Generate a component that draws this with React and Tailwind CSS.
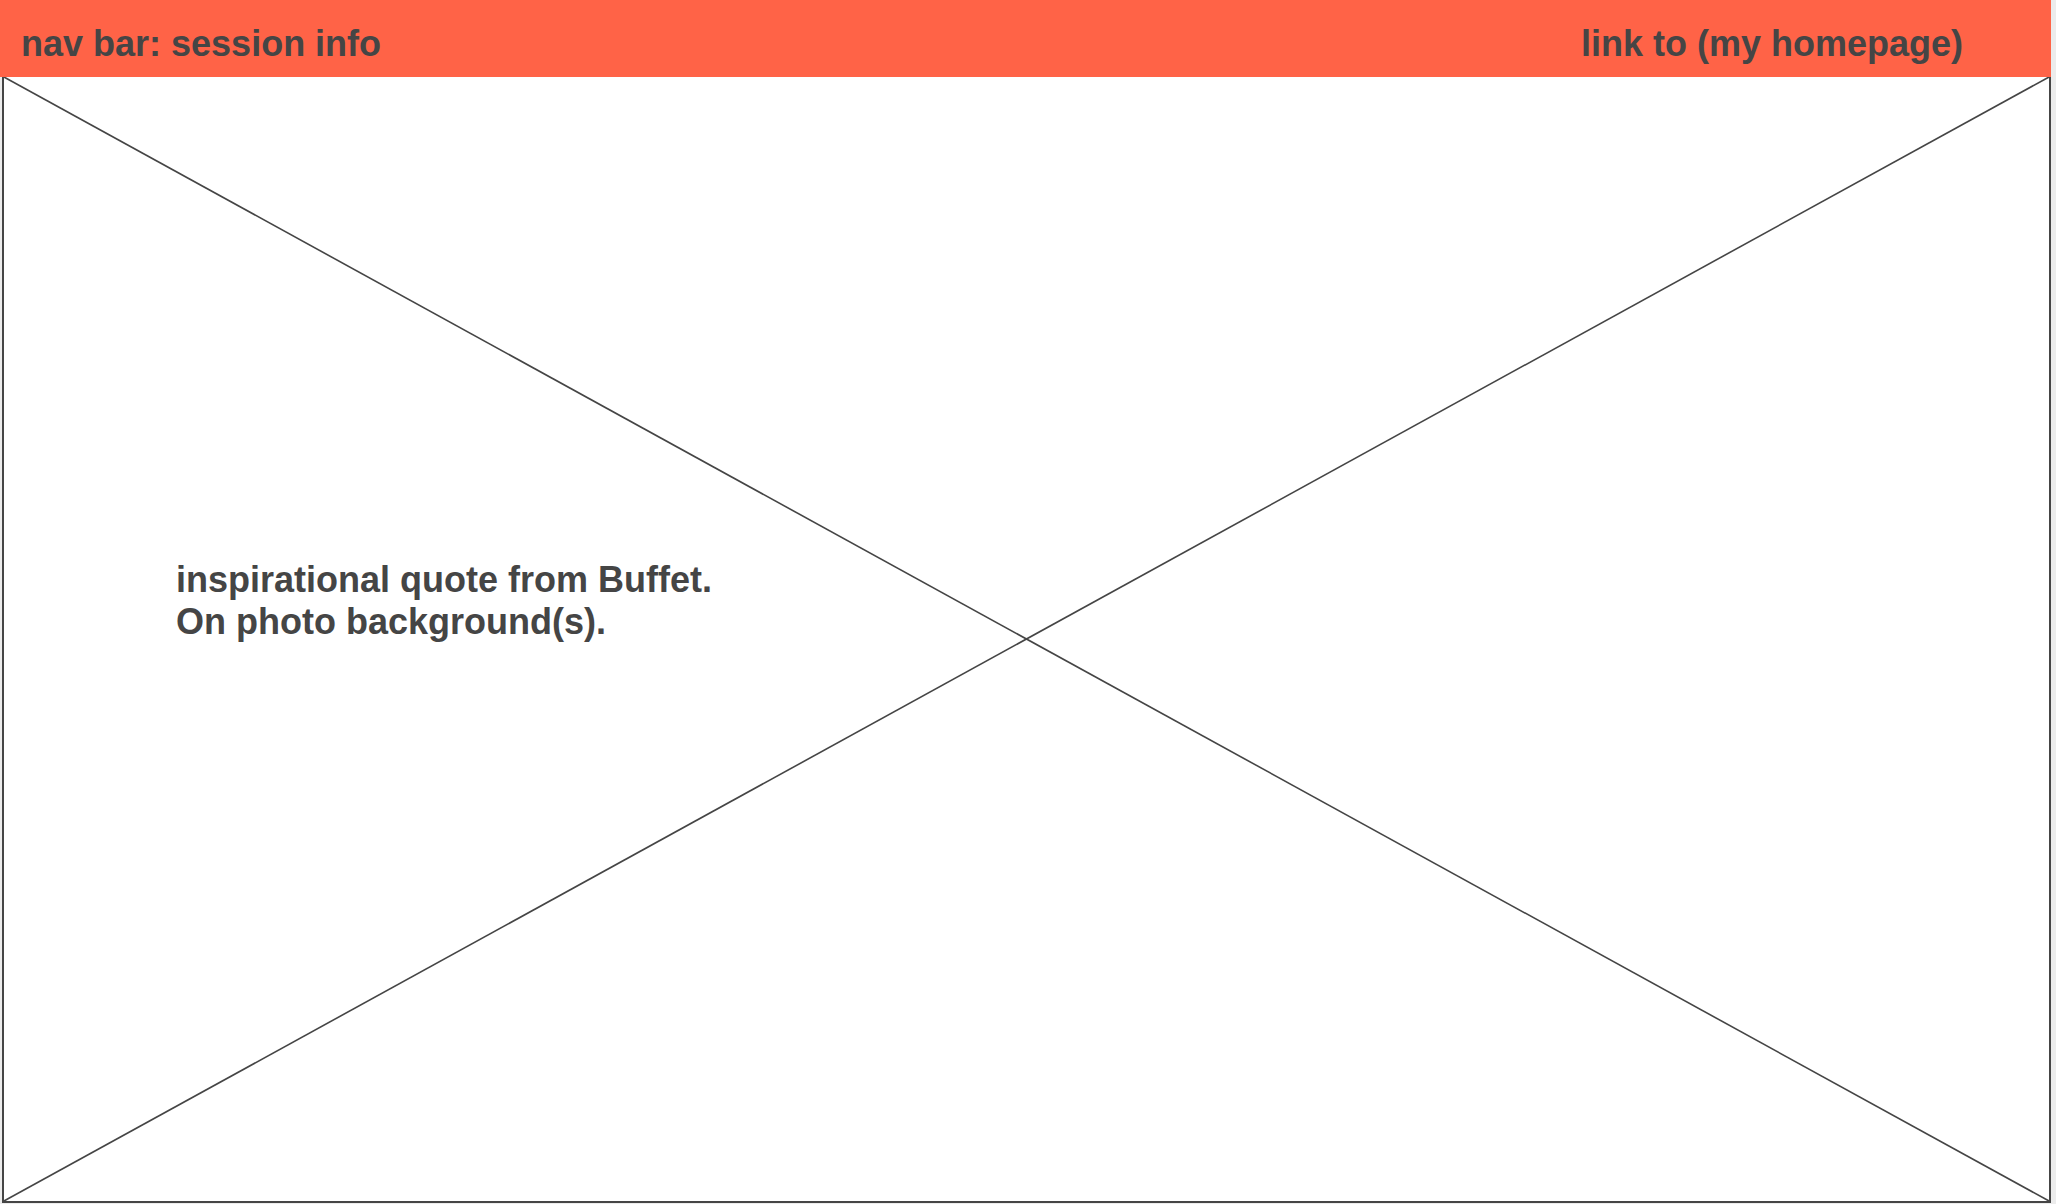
export default function App() {
  return (
    <div
      className="w-[2056px] h-[1204px] bg-[#ececec] flex flex-col overflow-hidden"
      style={{ fontFamily: '"Liberation Sans", Arial, sans-serif' }}
    >
      <nav className="w-[2051px] h-[77px] shrink-0 bg-[#ff6347] flex items-center justify-between pl-[21px] pr-[88px] pt-[10px] text-[#454545] font-bold text-[36px] leading-none">
        <span>nav bar: session info</span>
        <a href="#">link to (my homepage)</a>
      </nav>
      <main className="relative ml-[2px] w-[2049px] h-[1126px] shrink-0 border-2 border-t-0 border-[#454545] bg-white">
        <svg
          className="absolute inset-0 w-full h-full"
          viewBox="0 0 100 100"
          preserveAspectRatio="none"
        >
          <line x1="0" y1="0" x2="100" y2="100" stroke="#454545" strokeWidth="1.6" vectorEffect="non-scaling-stroke" />
          <line x1="100" y1="0" x2="0" y2="100" stroke="#454545" strokeWidth="1.6" vectorEffect="non-scaling-stroke" />
        </svg>
        <div className="relative pl-[172px] pt-[482px] text-[#454545] font-bold text-[36px] leading-[42px]">
          <p>inspirational quote from Buffet.</p>
          <p>On photo background(s).</p>
        </div>
      </main>
    </div>
  );
}
